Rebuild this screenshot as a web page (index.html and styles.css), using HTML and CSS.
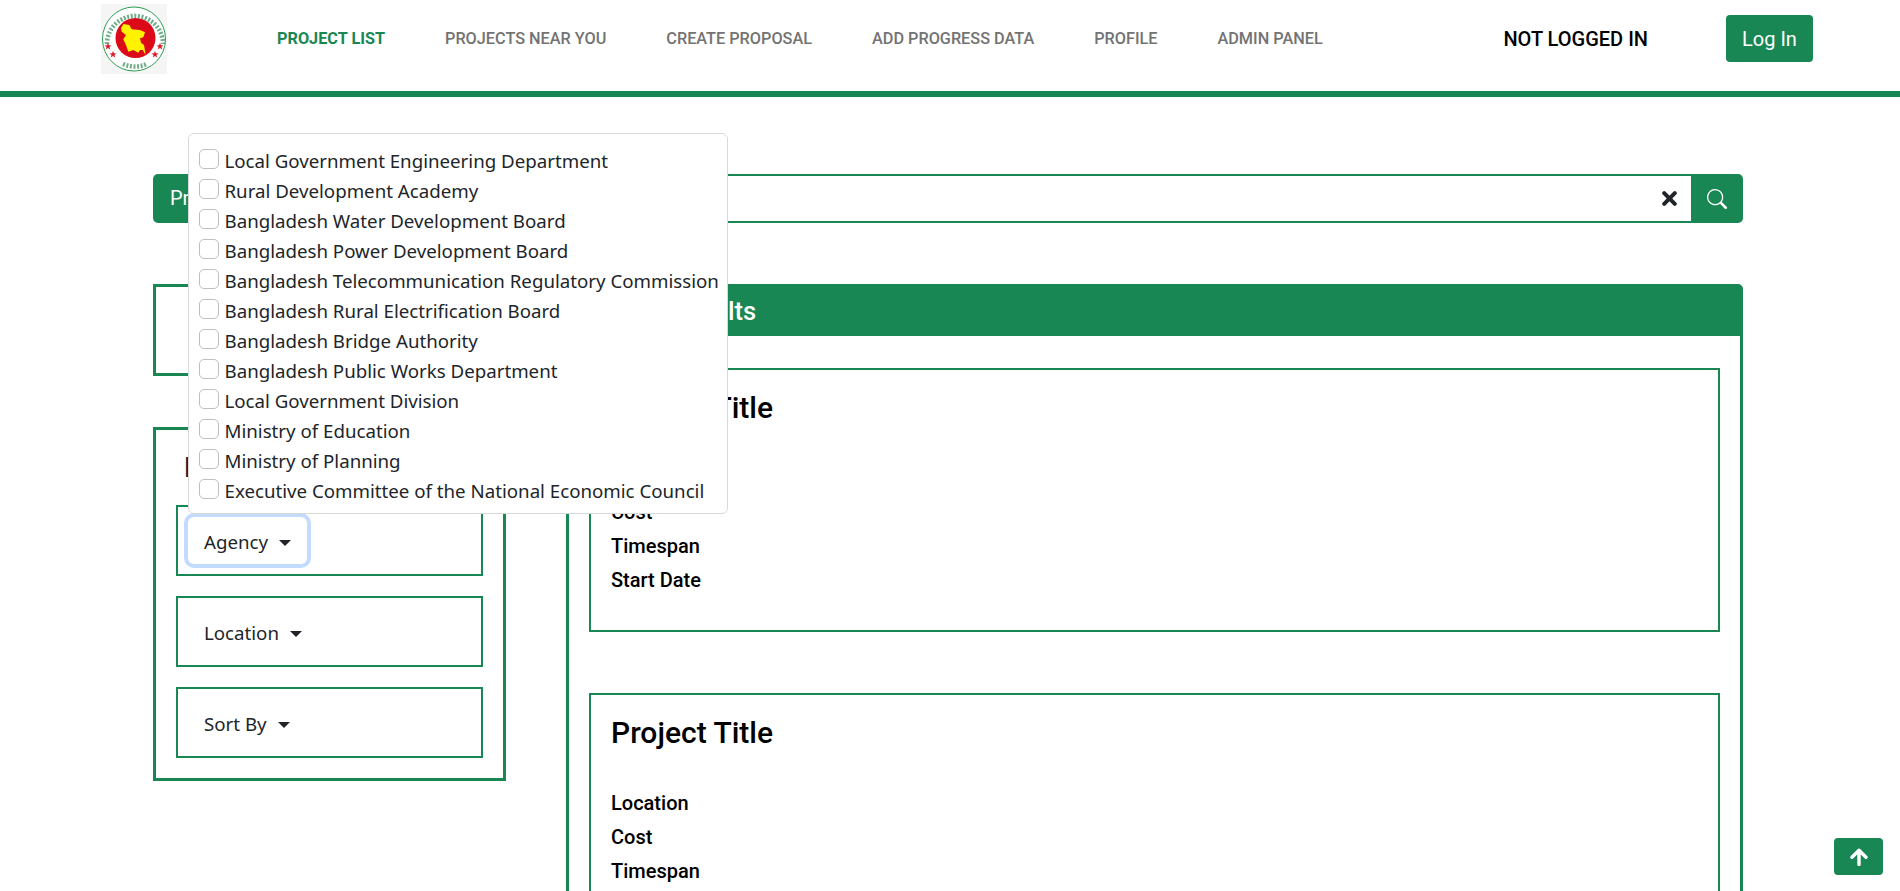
FILE: index.html
```html
<!DOCTYPE html>
<html lang="en">
<head>
<meta charset="utf-8">
<title>Project List</title>
<link rel="stylesheet" href="styles.css">
</head>
<body>
<header class="topbar">
  <svg class="logo" viewBox="0 0 66 70" role="img" aria-label="Government of Bangladesh seal">
    <rect width="66" height="70" fill="#f4f5f4"/>
    <ellipse cx="33" cy="35" rx="31.500" ry="32" fill="#fff" stroke="#2f9e55" stroke-width="1"/>
    <path d="M6 40A27 27 0 1 1 62 40" fill="none" stroke="#4b9a6a" stroke-width="4.500" stroke-dasharray="2 1.600" opacity=".8"/>
    <path d="M22 60Q34 65 46 60" fill="none" stroke="#4b9a6a" stroke-width="4.500" stroke-dasharray="2 1.600" opacity=".8"/>
    <circle cx="34.500" cy="34" r="20" fill="#dc0a18"/>
    <path d="M20 24.300L22.300 20 28.300 21 30.700 25.300 39 26 44 28.300 42.300 33.300 39 34.300 40 38.700 43 41 44.700 51 41.700 46 39 46 37.300 48.700 32.300 46 27.300 47.700 25 41 22.300 35.300 25 31 20.700 27.700z" fill="#fff200"/>
    <g fill="#dc2030">
      <path d="M7 39l1 2.300 2.500.200-2 1.500.700 2.500-2.200-1.400-2.200 1.400.700-2.500-2-1.500 2.500-.200z"/>
      <path d="M59 39l1 2.300 2.500.200-2 1.500.700 2.500-2.200-1.400-2.200 1.400.700-2.500-2-1.500 2.500-.200z"/>
      <path d="M12 47l1 2.300 2.500.200-2 1.500.700 2.500-2.200-1.400-2.200 1.400.700-2.500-2-1.500 2.500-.200z"/>
      <path d="M54 47l1 2.300 2.500.200-2 1.500.700 2.500-2.200-1.400-2.200 1.400.700-2.500-2-1.500 2.500-.200z"/>
    </g>
  </svg>
  <nav class="nav">
    <a class="nav-link is-active" href="#">Project List</a>
    <a class="nav-link" href="#">Projects Near You</a>
    <a class="nav-link" href="#">Create Proposal</a>
    <a class="nav-link" href="#">Add Progress Data</a>
    <a class="nav-link" href="#">Profile</a>
    <a class="nav-link" href="#">Admin Panel</a>
  </nav>
  <span class="login-state">NOT LOGGED IN</span>
  <button class="login-btn" type="button">Log In</button>
</header>

<main class="page">
  <form class="search">
    <label class="search-label" for="q">Project Search</label>
    <div class="search-field">
      <input class="search-input" id="q" type="text">
      <svg class="clear-icon" viewBox="0 0 15 15" aria-hidden="true"><path d="M2.200 2.200l10.600 10.600M12.800 2.200L2.200 12.800" stroke="#212529" stroke-width="4" stroke-linecap="round" fill="none"/></svg>
    </div>
    <button class="search-btn" type="button" aria-label="Search">
      <svg class="search-icon" viewBox="0 0 16 16" aria-hidden="true"><path fill="#fff" d="M11.742 10.344a6.500 6.500 0 1 0-1.397 1.398h-.001c.03.04.062.078.098.115l3.850 3.850a1 1 0 0 0 1.415-1.414l-3.850-3.850a1.007 1.007 0 0 0-.115-.1zM12 6.500a5.500 5.500 0 1 1-11 0 5.500 5.500 0 0 1 11 0z"/></svg>
    </button>
  </form>

  <div class="columns">
    <aside class="sidebar">
      <section class="panel panel-map"></section>
      <section class="panel panel-filters">
        <h2 class="filters-title">Filters</h2>
        <div class="filter-box">
          <div class="dropdown">
            <button class="dropdown-toggle is-focused" type="button">Agency</button>
            <div class="dropdown-menu">
              <label class="check-row"><input type="checkbox"><span>Local Government Engineering Department</span></label>
              <label class="check-row"><input type="checkbox"><span>Rural Development Academy</span></label>
              <label class="check-row"><input type="checkbox"><span>Bangladesh Water Development Board</span></label>
              <label class="check-row"><input type="checkbox"><span>Bangladesh Power Development Board</span></label>
              <label class="check-row"><input type="checkbox"><span>Bangladesh Telecommunication Regulatory Commission</span></label>
              <label class="check-row"><input type="checkbox"><span>Bangladesh Rural Electrification Board</span></label>
              <label class="check-row"><input type="checkbox"><span>Bangladesh Bridge Authority</span></label>
              <label class="check-row"><input type="checkbox"><span>Bangladesh Public Works Department</span></label>
              <label class="check-row"><input type="checkbox"><span>Local Government Division</span></label>
              <label class="check-row"><input type="checkbox"><span>Ministry of Education</span></label>
              <label class="check-row"><input type="checkbox"><span>Ministry of Planning</span></label>
              <label class="check-row"><input type="checkbox"><span>Executive Committee of the National Economic Council</span></label>
            </div>
          </div>
        </div>
        <div class="filter-box"><div class="dropdown"><button class="dropdown-toggle" type="button">Location</button></div></div>
        <div class="filter-box"><div class="dropdown"><button class="dropdown-toggle" type="button">Sort By</button></div></div>
      </section>
    </aside>

    <section class="results">
      <h2 class="results-head">Search Results</h2>
      <div class="results-body">
        <article class="card">
          <h3 class="card-title">Project Title</h3>
          <p class="card-row">Location</p>
          <p class="card-row">Cost</p>
          <p class="card-row">Timespan</p>
          <p class="card-row">Start Date</p>
        </article>
        <article class="card">
          <h3 class="card-title">Project Title</h3>
          <p class="card-row">Location</p>
          <p class="card-row">Cost</p>
          <p class="card-row">Timespan</p>
          <p class="card-row">Start Date</p>
        </article>
      </div>
    </section>
  </div>
</main>

<button class="to-top" type="button" aria-label="Back to top">
  <svg class="to-top-icon" viewBox="0 0 18 18" aria-hidden="true"><path d="M9 16.500V2.500M2 9.200L9 2.200l7 7" stroke="#fff" stroke-width="3.400" stroke-linecap="round" stroke-linejoin="round" fill="none"/></svg>
</button>
</body>
</html>
```
FILE: styles.css
```css
* { box-sizing: border-box; }
html, body { height: 100%; overflow: hidden; }
body {
  margin: 0;
  background: #fff;
  color: #000;
  font-family: Roboto, "Liberation Sans", sans-serif;
}

.topbar {
  display: flex;
  align-items: flex-start;
  height: 97px;
  padding-left: 101px;
  border-bottom: 6px solid #198754;
}
.logo { width: 66px; height: 70px; margin-top: 4px; flex: none; }
.nav { display: flex; gap: 60px; margin-left: 110px; margin-top: 29px; }
.nav-link {
  font-size: 16.26px;
  line-height: 20px;
  font-weight: 500;
  text-transform: uppercase;
  text-decoration: none;
  color: #737373;
}
.nav-link.is-active { color: #198754; font-weight: 700; }
.login-state {
  margin-left: auto;
  margin-right: 78px;
  margin-top: 27px;
  font-size: 20px;
  line-height: 24px;
  font-weight: 500;
  color: #000;
}
.login-btn {
  margin-right: 87px;
  margin-top: 15px;
  width: 87px;
  height: 47px;
  border: 0;
  border-radius: 4px;
  background: #198754;
  color: #fff;
  font: 400 20px/30px Roboto, sans-serif;
}

.page { padding: 77px 157px 0 153px; }

.search { display: flex; height: 49px; }
.search-label {
  flex: none;
  width: 300px;
  padding: 9px 17px;
  background: #198754;
  color: #fff;
  font-size: 20px;
  line-height: 30px;
  border-radius: 5px 0 0 5px;
}
.search-field {
  flex: 1;
  display: flex;
  align-items: center;
  padding-right: 14px;
  border-top: 2px solid #198754;
  border-bottom: 2px solid #198754;
}
.search-input { flex: 1; border: 0; outline: 0; height: 100%; background: transparent; }
.clear-icon { width: 15px; height: 15px; flex: none; }
.search-btn {
  flex: none;
  display: flex;
  align-items: center;
  justify-content: center;
  width: 52px;
  padding: 0;
  border: 0;
  background: #198754;
  border-radius: 0 5px 5px 0;
}
.search-icon { width: 20px; height: 20px; }

.columns { display: flex; align-items: flex-start; gap: 60px; margin-top: 61px; }
.sidebar { flex: none; width: 353px; display: flex; flex-direction: column; gap: 51px; }
.panel { border: 3px solid #198754; }
.panel-map { height: 92px; }
.panel-filters { display: flex; flex-direction: column; gap: 20px; padding: 20px; }
.filters-title {
  margin: 0;
  padding-left: 8px;
  font-size: 28px;
  line-height: 35px;
  font-weight: 500;
  color: #212529;
}
.filter-box { height: 71px; padding: 10px; border: 2px solid #198754; }
.dropdown { position: relative; display: inline-block; }
.dropdown-toggle {
  display: block;
  height: 47px;
  padding: 9px 16px 7px;
  border: 0;
  border-radius: 6px;
  background: #fff;
  color: #212529;
  font: 400 18.7px/30px "Noto Sans", "Open Sans", sans-serif;
}
.dropdown-toggle::after {
  content: "";
  display: inline-block;
  margin-left: 11px;
  vertical-align: 3px;
  border-top: 6px solid #212529;
  border-left: 6px solid transparent;
  border-right: 6px solid transparent;
}
.dropdown-toggle.is-focused { box-shadow: 0 0 0 4px #c2dbfe; }
.dropdown-menu {
  position: absolute;
  left: 0;
  bottom: calc(100% + 3px);
  z-index: 10;
  width: 540px;
  padding: 9px 8px 10px 10px;
  background: #fff;
  border: 1px solid #d9d9d9;
  border-radius: 6px;
}
.check-row {
  display: flex;
  align-items: flex-start;
  height: 30px;
  color: #212529;
  font: 400 18.7px/36px "Noto Sans", "Open Sans", sans-serif;
  white-space: nowrap;
}
.check-row input {
  appearance: none;
  width: 20px;
  height: 20px;
  margin: 6px 5.500px 0 0;
  flex: none;
  background: #fff;
  border: 1px solid #bfbfbf;
  border-radius: 5px;
}

.results {
  flex: 1;
  min-width: 0;
  border: 3px solid #198754;
  border-radius: 5px 5px 0 0;
}
.results-head {
  margin: 0;
  height: 49px;
  padding: 9px 0 0 16px;
  background: #198754;
  color: #fff;
  font-size: 25.6px;
  line-height: 30px;
  font-weight: 500;
}
.results-body { display: flex; flex-direction: column; gap: 61px; padding: 32px 20px 0; }
.card { height: 264px; padding: 21px 20px 0; border: 2px solid #198754; }
.card-title {
  margin: 0 0 36px;
  font-size: 30px;
  line-height: 34px;
  font-weight: 500;
  color: #000;
}
.card-row {
  margin: 0;
  font-size: 20px;
  line-height: 34px;
  font-weight: 500;
  color: #000;
}

.to-top {
  position: fixed;
  right: 17px;
  bottom: 16px;
  display: flex;
  align-items: center;
  justify-content: center;
  width: 49px;
  height: 37px;
  padding: 0;
  border: 0;
  border-radius: 4px;
  background: #198754;
}
.to-top-icon { width: 18px; height: 18px; }
```
